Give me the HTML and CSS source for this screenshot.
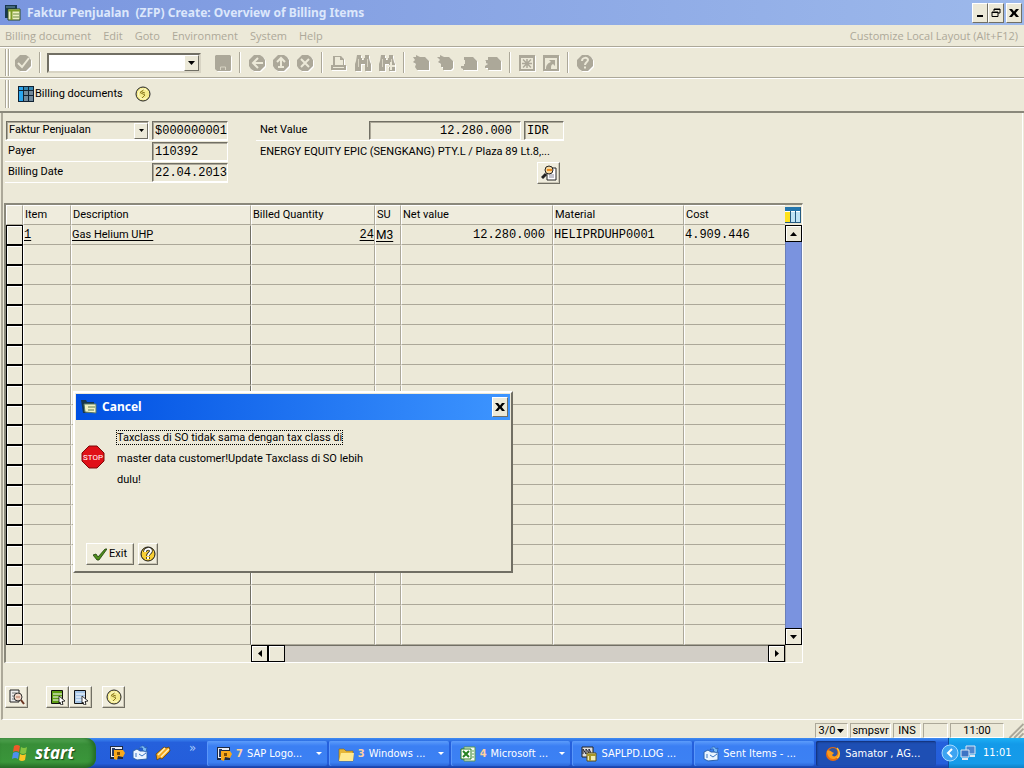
FILE: index.html
```html
<!DOCTYPE html>
<html lang="id">
<head>
<meta charset="utf-8">
<title>Faktur Penjualan (ZFP) Create: Overview of Billing Items</title>
<link rel="stylesheet" href="styles.css">
</head>
<body>
<svg class="defs" aria-hidden="true">
  <symbol id="close" viewBox="0 0 10 10"><path d="M0 1h3l2 2.500L7 1h3L6.700 5 10 9H7L5 6.500 3 9H0l3.300-4z" fill="#000"/></symbol>
  <symbol id="dot" viewBox="0 0 16 16"><path d="M5 0h6l3 2 2 3v6l-3 3-2 2H5l-3-2-2-3V5l3-3z"/></symbol>
  <symbol id="bino" viewBox="0 0 16 16"><path d="M2 0h4v3h1v2h2V3h1V0h4v3l1 4 1 2v7h-6V9H6v7H0V9l1-3z"/><path d="M3.500 4v8M12.500 4v8" stroke="#d8d4c3" fill="none"/></symbol>
  <symbol id="clock" viewBox="0 0 16 16"><circle cx="8" cy="8" r="7" fill="#f5ec8c" stroke="#222"/><path d="M12 4.500a5 5 0 1 0 0 7" fill="none" stroke="#fffbd0"/><path d="M8.500 4 5 6.500l5 2.500-3 3M7 6l3 1" fill="none" stroke="#8a7a20"/></symbol>
  <symbol id="win" viewBox="0 0 16 16"><path d="M0 0h12v13H0z" fill="#18384c"/><path d="M1 2h9" stroke="#6f95ad"/><path d="M3 4h12v11H3z" fill="#eef0c0" stroke="#2d4a20"/><path d="M3 5.500h12M6.500 5v10" stroke="#7d9c28" stroke-width="2"/><path d="M8 9h6M8 12h6" stroke="#6b8c40"/></symbol>
  <symbol id="sap" viewBox="0 0 16 16"><path d="M1 1h13v13H1z" fill="#1d2a45"/><path d="M2 2h11v2H5v8H2z" fill="#e9eef7"/><path d="M3 3h3v8H3z" fill="#263a66"/><path d="M5 5h9l2 3-2 4-5-1-1 4-3-1z" fill="#f8a91b"/><path d="M8 7h3v3H8z" fill="#7a4b05"/></symbol>
  <symbol id="mail" viewBox="0 0 16 16"><path d="M1 6 5 4l3 2h7v8L5 15 1 13z" fill="#eaf4ff" stroke="#2b62ac"/><path d="M7 4c2-4 5-4 6-1l2-1-1 5-4-2 1-1c-1-2-2-1-4 0z" fill="#79baf5" stroke="#1c4f9d" stroke-width=".6"/><path d="M4 8v4M7 9l3 2 4-3" stroke="#3b77c2" fill="none"/></symbol>
  <symbol id="list" viewBox="0 0 16 16"><path d="M1.500 1.500h11v13h-11z" stroke="#111"/><path d="M3 5h9M3 8h9M3 11h9" stroke="#fff"/><path d="m9 7 6 5-3 .5 1 3-2 .5-1-3-1 1z" fill="#fff" stroke="#111" stroke-width=".8"/></symbol>
</svg>

<header class="titlebar">
  <svg class="i16"><use href="#win"/></svg>
  <h1>Faktur Penjualan&nbsp; (ZFP) Create: Overview of Billing Items</h1>
  <div class="winbuttons">
    <button class="wb" aria-label="Minimize"><svg viewBox="0 0 10 10"><path d="M2 7h6v2H2z"/></svg></button>
    <button class="wb" aria-label="Restore"><svg viewBox="0 0 10 10"><path d="M3 3V1h6v4H7M3 1.500h6M1 4h6v4.500H1zM1 4.500h6" fill="none" stroke="#000"/></svg></button>
    <button class="wb wb-close" aria-label="Close"><svg><use href="#close"/></svg></button>
  </div>
</header>

<nav class="menubar">
  <button>Billing document</button><button>Edit</button><button>Goto</button><button>Environment</button><button>System</button><button>Help</button>
  <button class="menu-right">Customize Local Layout (Alt+F12)</button>
</nav>

<div class="toolbar">
  <span class="grip"></span>
  <button class="tb" aria-label="Enter" disabled><svg class="i16"><use href="#dot"/><path class="cut" d="m3 8 4 4 7-9"/></svg></button>
  <span class="sep"></span>
  <div class="command"><input aria-label="Command"><button aria-label="History"><svg class="arrow" viewBox="0 0 7 4"><path d="M0 0h7L3.500 4z"/></svg></button></div>
  <span class="space"></span>
  <button class="tb" aria-label="Save" disabled><svg class="i16"><path d="M1 0h14l1 1v14l-1 1H2l-2-2V1z"/><path d="M5.500 15v-3h5v3" stroke="#d8d4c3" fill="none"/></svg></button>
  <span class="sep"></span>
  <button class="tb" aria-label="Back" disabled><svg class="i16"><use href="#dot"/><path class="cut" d="M9 3 4 8l5 5M4 8h10"/></svg></button>
  <button class="tb" aria-label="Exit session" disabled><svg class="i16"><use href="#dot"/><path class="cut" d="m4 7 4-4 4 4M8 4v8M5 12h6"/></svg></button>
  <button class="tb" aria-label="Cancel" disabled><svg class="i16"><use href="#dot"/><path class="cut" d="m4 4 8 8m0-8-8 8"/></svg></button>
  <span class="sep"></span>
  <button class="tb" aria-label="Print" disabled><svg class="i16"><path d="M2 1h8l3 3v6h2v5H0v-5h2z"/><path d="M4 2h5v3h3v5H4zM2 12h11v1H2z" fill="#ece9d8"/></svg></button>
  <button class="tb" aria-label="Find" disabled><svg class="i16"><use href="#bino"/></svg></button>
  <button class="tb" aria-label="Find next" disabled><svg class="i16"><use href="#bino"/><path class="cut" d="M12 7v8M8 11h8"/></svg></button>
  <span class="sep"></span>
  <button class="tb" aria-label="First page" disabled><svg class="i16"><path d="M0 2h3V0l4 2h5l4 4v9H4l-2-3 1-3-3-2 2-2z"/></svg></button>
  <button class="tb" aria-label="Previous page" disabled><svg class="i16"><path d="M0 2h3V0l4 2h5l4 4v7l-2 2H6v-3H4V9L1 7l2-2z"/></svg></button>
  <button class="tb" aria-label="Next page" disabled><svg class="i16"><path d="M3 5V2h9l4 4v9H2v-1l-2-1v-2h3V9h1V5z"/></svg></button>
  <button class="tb" aria-label="Last page" disabled><svg class="i16"><path d="M3 2h9l4 4v9H3v-2H0v-2l3-2-2-1V6L0 5h3z"/></svg></button>
  <span class="sep"></span>
  <button class="tb" aria-label="New session" disabled><svg class="i16"><path d="M0 0h16v16H0z"/><path d="M2 3h12v11H2z" fill="#ece9d8"/><path d="M8 4v9M3 8.500h10M4 4.500l8 8M12 4.500l-8 8" stroke="#aca899" stroke-width="1.500"/></svg></button>
  <button class="tb" aria-label="Create shortcut" disabled><svg class="i16"><path d="M0 0h16v16H0z"/><path d="M2 3h12v11H2z" fill="#ece9d8"/><path d="M6 5h6v6l-2-2c-2 1-2 2-2 5H3c0-4 2-6 5-7z"/></svg></button>
  <span class="sep"></span>
  <button class="tb" aria-label="Help" disabled><svg class="i16"><use href="#dot"/><path class="cut" d="M5 6c0-4 6-4 6-1 0 2-3 2-3 5M8 11.500v2"/></svg></button>
</div>

<div class="toolbar appbar">
  <span class="grip"></span>
  <button class="app"><svg class="i16"><path d="M0 0h16v16H0z" fill="#123"/><path d="M1 1h4v3H1zM1 5h4v10H1z" fill="#2aa5ee"/><path d="M6 1h4v3H6zM11 1h4v3h-4z" fill="#3586b0"/><path d="M6 5h4v4H6zM11 5h4v4h-4zM6 10h4v5H6zM11 10h4v5h-4z" fill="#71899b"/></svg>Billing documents</button>
  <button class="app" aria-label="Conditions"><svg class="i16"><use href="#clock"/></svg></button>
</div>

<main>
  <div class="form">
    <div class="group">
      <div class="line">
        <div class="combo"><select aria-label="Billing type"><option>Faktur Penjualan</option></select><span class="drop"><svg class="arrow" viewBox="0 0 7 4"><path d="M0 0h7L3.500 4z"/></svg></span></div>
        <input class="field" aria-label="Document number" value="$000000001">
      </div>
      <div class="line"><label for="payer">Payer</label><input class="field" id="payer" value="110392"></div>
      <div class="line"><label for="date">Billing Date</label><input class="field" id="date" value="22.04.2013"></div>
    </div>
    <div class="group group-right">
      <div class="line"><label for="net">Net Value</label><input class="field net" id="net" value="12.280.000"><input class="field cur" aria-label="Currency" value="IDR"></div>
      <p>ENERGY EQUITY EPIC (SENGKANG) PTY.L / Plaza 89 Lt.8,...</p>
      <button class="raised detail" aria-label="Header details"><svg class="i16"><path d="M6 3h9v12H6z" fill="#fff" stroke="#222"/><path d="M8 10h5M8 12h5" stroke="#889"/><path d="M1 13l4-4" stroke="#222" stroke-width="3"/><circle cx="8" cy="5" r="4" fill="#f6d9a0" stroke="#222"/><path d="M6 4h5v2H6z" fill="#ef8d22"/></svg></button>
    </div>
  </div>

  <div class="grid">
    <table>
      <colgroup><col class="c-sel"><col class="c-item"><col class="c-desc"><col class="c-qty"><col class="c-su"><col class="c-net"><col class="c-mat"><col class="c-cost"></colgroup>
      <thead><tr><th></th><th>Item</th><th>Description</th><th>Billed Quantity</th><th>SU</th><th>Net value</th><th>Material</th><th>Cost</th></tr></thead>
      <tbody>
        <tr><td></td><td><a href="#" class="mono">1</a></td><td><a href="#">Gas Helium UHP</a></td><td class="num"><a href="#" class="mono">24</a></td><td><a href="#" class="su">M3</a></td><td class="num mono amount">12.280.000</td><td class="mono">HELIPRDUHP0001</td><td class="mono">4.909.446</td></tr>
        <tr><td></td><td></td><td></td><td></td><td></td><td></td><td></td><td></td></tr>
        <tr><td></td><td></td><td></td><td></td><td></td><td></td><td></td><td></td></tr>
        <tr><td></td><td></td><td></td><td></td><td></td><td></td><td></td><td></td></tr>
        <tr><td></td><td></td><td></td><td></td><td></td><td></td><td></td><td></td></tr>
        <tr><td></td><td></td><td></td><td></td><td></td><td></td><td></td><td></td></tr>
        <tr><td></td><td></td><td></td><td></td><td></td><td></td><td></td><td></td></tr>
        <tr><td></td><td></td><td></td><td></td><td></td><td></td><td></td><td></td></tr>
        <tr><td></td><td></td><td></td><td></td><td></td><td></td><td></td><td></td></tr>
        <tr><td></td><td></td><td></td><td></td><td></td><td></td><td></td><td></td></tr>
        <tr><td></td><td></td><td></td><td></td><td></td><td></td><td></td><td></td></tr>
        <tr><td></td><td></td><td></td><td></td><td></td><td></td><td></td><td></td></tr>
        <tr><td></td><td></td><td></td><td></td><td></td><td></td><td></td><td></td></tr>
        <tr><td></td><td></td><td></td><td></td><td></td><td></td><td></td><td></td></tr>
        <tr><td></td><td></td><td></td><td></td><td></td><td></td><td></td><td></td></tr>
        <tr><td></td><td></td><td></td><td></td><td></td><td></td><td></td><td></td></tr>
        <tr><td></td><td></td><td></td><td></td><td></td><td></td><td></td><td></td></tr>
        <tr><td></td><td></td><td></td><td></td><td></td><td></td><td></td><td></td></tr>
        <tr><td></td><td></td><td></td><td></td><td></td><td></td><td></td><td></td></tr>
        <tr><td></td><td></td><td></td><td></td><td></td><td></td><td></td><td></td></tr>
        <tr><td></td><td></td><td></td><td></td><td></td><td></td><td></td><td></td></tr>
      </tbody>
    </table>
    <div class="vscroll">
      <button class="config" aria-label="Table settings"><svg class="i16"><path d="M0 0h16v16H0z" fill="#fff"/><path d="M0 0h16v4H0z" fill="#2476ad"/><path d="M0 5h5v10H0z" fill="#ffe21c"/><path d="M6 5h4v10H6zM11 5h4v10h-4z" fill="#bfe3f5"/><path d="M5.500 4v12M10.500 4v12M15.500 0v16M0 15.500h16" stroke="#245a80"/></svg></button>
      <button class="sb" aria-label="Scroll up"><svg class="arrow" viewBox="0 0 7 4"><path d="M0 4h7L3.500 0z"/></svg></button>
      <span class="track"></span>
      <button class="sb" aria-label="Scroll down"><svg class="arrow" viewBox="0 0 7 4"><path d="M0 0h7L3.500 4z"/></svg></button>
    </div>
    <div class="hscroll">
      <span class="fixed"></span>
      <button class="sb" aria-label="Scroll left"><svg class="side" viewBox="0 0 4 7"><path d="M4 0v7L0 3.500z"/></svg></button>
      <button class="sb" aria-label="Scroll position"></button>
      <span class="track"></span>
      <button class="sb" aria-label="Scroll right"><svg class="side" viewBox="0 0 4 7"><path d="M0 0v7l4-3.500z"/></svg></button>
    </div>
    <span class="corner"></span>
  </div>

  <div class="actions">
    <button class="raised" aria-label="Item details"><svg class="i16"><path d="M1 1h9v12H1z" fill="#eee" stroke="#222"/><path d="M3 4h5M3 7h3M3 10h4" stroke="#777"/><circle cx="9" cy="8" r="4" fill="#f2d8c8" stroke="#333"/><path d="M7 8h4" stroke="#b87058"/><path d="m12 11 3 4" stroke="#6b3522" stroke-width="2"/></svg></button>
    <div class="pair">
      <button class="raised" aria-label="Select all"><svg class="i16" fill="#5d9c13"><use href="#list"/></svg></button>
      <button class="raised" aria-label="Deselect all"><svg class="i16" fill="#a4c4e4"><use href="#list"/></svg></button>
    </div>
    <button class="raised" aria-label="Item conditions"><svg class="i16"><use href="#clock"/></svg></button>
  </div>

  <section class="dialog" role="dialog" aria-label="Cancel">
    <header class="dialog-title">
      <svg class="i16" viewBox="0 0 16 16"><path d="M0 1h5l1 2h7v11H2z" fill="#16364f"/><path d="M3 5h12v9L4 13z" fill="#f1f2c4" stroke="#587a6a"/><path d="M7 8h7M7 11h6" stroke="#5d7b4b"/></svg>
      <h2>Cancel</h2>
      <button class="wb" aria-label="Close dialog"><svg><use href="#close"/></svg></button>
    </header>
    <div class="dialog-body">
      <svg class="stop" viewBox="0 0 24 24"><path d="M8 1h8l7 7v8l-7 7H8l-7-7V8z" fill="#e01018" stroke="#7d0808"/><text x="12" y="15" text-anchor="middle">STOP</text></svg>
      <div class="message"><p><span class="focus">Taxclass di SO tidak sama dengan tax class di</span></p><p>master data customer!Update Taxclass di SO lebih</p><p>dulu!</p></div>
    </div>
    <footer>
      <button class="raised exit"><svg viewBox="0 0 14 14"><path d="m0 8 3-1 2 3 7-8h2L6 13H4z" fill="#4f8f1a" stroke="#1d3d0b" stroke-width=".8"/></svg>Exit</button>
      <button class="raised help" aria-label="Help on message"><svg class="i16" viewBox="0 0 16 16"><circle cx="8" cy="8" r="7" fill="#f8cf35" stroke="#111"/><path d="M5 6c0-4 6-4 6-1 0 2-3 2-3 5M8 11v2" fill="none" stroke="#222" stroke-width="3.500"/><path d="M5 6c0-4 6-4 6-1 0 2-3 2-3 5M8 11v2" fill="none" stroke="#fff" stroke-width="2"/></svg></button>
    </footer>
  </section>
</main>

<div class="status">
  <span class="s-sys">3/0<svg class="arrow" viewBox="0 0 7 4"><path d="M0 0h7L3.500 4z"/></svg></span><span class="s-srv">smpsvr</span><span class="s-ins">INS</span><span class="s-empty"></span><span class="s-time">11:00</span>
  <svg class="sizer" viewBox="0 0 16 16"><path d="M1 16 16 1M6 16 16 6M11 16l5-5" stroke="#aaa79a" stroke-width="2"/></svg>
</div>

<footer class="taskbar">
  <button class="start"><svg viewBox="0 0 18 18"><path d="M3 2q3-2 6 0L8 8Q5 6 2 8z" fill="#ee5a29"/><path d="M10 3q3 2 6 0l-1 6q-3 2-6 0z" fill="#83c441"/><path d="M2 9q3-2 6 0l-1 6q-3-2-6 0z" fill="#4e8fee"/><path d="M9 10q3 2 6 0l-1 6q-3 2-6 0z" fill="#fbc525"/></svg>start</button>
  <div class="quick">
    <svg class="i16"><use href="#sap"/></svg><svg class="i16"><use href="#mail"/></svg>
    <svg class="i16"><path d="m1 9 8-7 2 1 3-1 1 4-8 8-2-1-3 2z" fill="#f4a81e" stroke="#5c3a05" stroke-width=".7"/><path d="m3 10 7-7M6 12l8-8" stroke="#fff2bd" stroke-width="1.500"/></svg>
    <span class="more">»</span>
  </div>
  <div class="tasks">
    <button><svg class="i16"><use href="#sap"/></svg><b>7</b><span>SAP Logo...</span><i></i></button>
    <button><svg class="i16"><path d="M1 3h5l2 2h7v10H1z" fill="#e6b637" stroke="#8a6610" stroke-width=".6"/><path d="M3 7h13l-1 8H1z" fill="#ffe98f"/></svg><b>3</b><span>Windows ...</span><i></i></button>
    <button><svg class="i16"><path d="M4 1h11v14H4z" fill="#f3faf0" stroke="#5a9a50"/><path d="M1 3h10v10H1z" fill="#fff" stroke="#2b7d22"/><path d="m3 5 6 6M9 5l-6 6" stroke="#258122" stroke-width="2"/><path d="M12 5h2M12 8h2M12 11h2" stroke="#5a9a50"/></svg><b>4</b><span>Microsoft ...</span><i></i></button>
    <button><svg class="i16"><path d="M1 1h11v10H1z" fill="#ddd" stroke="#222"/><path d="M2 8V3l3 5V3l3 4V3l2 4" fill="none" stroke="#223"/><path d="M6 7h9v8H6z" fill="#f1eeb5" stroke="#594b10"/><path d="M6 9h9M9 9v6" stroke="#a89728" stroke-width="2"/></svg><span>SAPLPD.LOG ...</span></button>
    <button><svg class="i16"><use href="#mail"/></svg><span>Sent Items - ...</span></button>
    <button class="active"><svg class="i16"><circle cx="8" cy="8" r="7" fill="#e66a10"/><circle cx="8" cy="6.500" r="4.500" fill="#3156a0"/><path d="M2 5c2-1 4 0 5 1l2 1-2 2c1 2 4 2 6-1 0 3-2 5-5 5S2 10 2 5z" fill="#f99b1c"/><path d="M12 2c3 3 3 8 0 10" fill="none" stroke="#ffc233" stroke-width="1.500"/></svg><span>Samator , AG...</span></button>
  </div>
  <div class="tray">
    <svg class="chev" viewBox="0 0 18 18"><circle cx="9" cy="9" r="8" fill="#3da4f2" stroke="#a5dbff"/><path d="M11 5 7 9l4 4" fill="none" stroke="#fff" stroke-width="2"/></svg>
    <svg class="i16"><path d="M6 1h9v8H6z" fill="#4d87d0" stroke="#dbe8f4"/><path d="M1 5h8v7H1z" fill="#3d74c4" stroke="#dbe8f4"/><path d="M2 14h6M10 11h5" stroke="#dbe8f4" stroke-width="2"/></svg>
    <span>11:01</span>
  </div>
</footer>
</body>
</html>
```
FILE: styles.css
```css
* { box-sizing: border-box; }
:root { --face: #ece9d8; --shade: #aca899; --dark: #716f64; }
body { margin: 0; min-height: 100vh; display: flex; flex-direction: column; background: var(--face); font: 11px/14px Roboto, "Liberation Sans", Arial, sans-serif; color: #000; }
button, input, select { font: inherit; color: inherit; margin: 0; padding: 0; border: 0; border-radius: 0; background: none; }
h1, h2, p { margin: 0; font-weight: normal; }
.defs { position: absolute; width: 0; height: 0; }
.i16 { width: 16px; height: 16px; flex: none; display: block; }
.arrow { width: 7px; height: 4px; flex: none; display: block; }
.side { width: 4px; height: 7px; display: block; }

.titlebar { display: flex; align-items: center; gap: 6px; height: 25px; padding: 0 2px 0 5px; background: linear-gradient(to right, #7a96df, #9db9eb); }
.titlebar h1 { flex: 1; font: bold 12px/16px "Noto Sans", "Open Sans", sans-serif; color: #dce7fb; }
.winbuttons { display: flex; }
.wb { display: flex; align-items: center; justify-content: center; width: 16px; height: 20px; background: var(--face); border: 1px solid; border-color: #fff var(--dark) var(--dark) #fff; }
.wb svg { width: 10px; height: 10px; }
.wb-close { margin-left: 2px; }

.menubar { display: flex; gap: 12px; align-items: center; height: 22px; padding: 0 6px 0 5px; border-bottom: 1px solid var(--shade); font: 11px/14px "Open Sans", "Noto Sans", sans-serif; color: var(--shade); }
.menu-right { margin-left: auto; }

.toolbar { display: flex; align-items: center; gap: 8px; height: 31px; padding-left: 5px; border-top: 1px solid #fff; border-bottom: 1px solid var(--shade); }
.grip { align-self: stretch; width: 4px; margin: 1px -2px 1px 0; border: solid; border-width: 0 1px; border-color: var(--shade); box-shadow: inset 1px 0 #fff, 1px 0 #fff; }
.sep { width: 2px; height: 21px; border-left: 1px solid var(--shade); border-right: 1px solid #fff; }
.space { width: 0; margin-left: -2px; }
.tb { fill: var(--shade); filter: drop-shadow(1px 1px 0 #fff); }
.cut { fill: none; stroke: var(--face); stroke-width: 2; }
.command { display: flex; width: 154px; height: 20px; margin-left: -2px; background: #fff; border: 2px solid; border-color: var(--dark) #d8d4c4 #d8d4c4 var(--dark); }
.command input { flex: 1; min-width: 0; outline: 0; }
.command button, .drop { display: flex; align-items: center; justify-content: center; width: 15px; background: var(--face); border: 1px solid; border-color: #fff var(--dark) var(--dark) #fff; }
.appbar { height: 35px; padding-bottom: 2px; border-bottom: 2px solid #8a887b; }
.app { display: flex; align-items: center; gap: 1px; margin-right: 4px; }
.appbar .grip { margin-right: 1px; }

main { position: relative; flex: 1; margin: 0 1px; padding: 7px 2px 0; border-left: 2px solid var(--shade); border-right: 1px solid #fff; border-bottom: 1px solid #fff; }
.form { display: flex; align-items: flex-start; gap: 28px; height: 83px; }
.group { width: 223px; }
.group-right { width: 308px; }
.line { display: flex; justify-content: space-between; align-items: center; gap: 3px; height: 21px; padding-left: 1px; border-bottom: 1px solid #fff; }
.line label { flex: 1; padding-left: 2px; }
.group-right .line label { padding-left: 3px; }
.group-right p { height: 21px; padding-left: 4px; line-height: 21px; white-space: nowrap; }
.field { width: 76px; height: 19px; padding: 1px 0 0 2px; font: 12px/16px "Liberation Mono", monospace; border: 1px solid; border-color: var(--dark) #fff #fff var(--dark); box-shadow: inset 1px 1px var(--shade); }
.net { width: 152px; padding-right: 8px; text-align: right; }
.cur { width: 40px; }
.combo { position: relative; flex: 1; height: 19px; border: 1px solid; border-color: var(--dark) #fff #fff var(--dark); box-shadow: inset 1px 1px var(--shade); }
.combo select { display: block; width: 100%; height: 17px; padding-left: 2px; appearance: none; }
.drop { position: absolute; top: 1px; right: 0; bottom: 0; width: 14px; pointer-events: none; }
.drop .arrow { width: 5px; height: 3px; }
.raised { display: flex; align-items: center; justify-content: center; width: 23px; height: 22px; background: #f0eddd; border: 1px solid; border-color: #fff var(--dark) var(--dark) #fff; box-shadow: inset -1px -1px #c9c5b4; }
.detail { margin: 0 4px 0 auto; }

.grid { display: grid; grid-template-columns: 779px 17px; width: max-content; margin-left: -1px; border: 1px solid var(--shade); border-top: 2px solid #8a887b; border-left: 2px solid #8a887b; border-right-color: #fff; border-bottom-color: #fff; }
table { table-layout: fixed; width: 779px; border-collapse: separate; border-spacing: 0; }
.c-sel { width: 17px; } .c-item { width: 48px; } .c-desc { width: 180px; } .c-qty { width: 124px; } .c-su { width: 26px; } .c-net { width: 152px; } .c-mat { width: 131px; } .c-cost { width: 101px; }
th { height: 20px; padding: 0 1px; text-align: left; font-weight: normal; background: #efecdd; border: 1px solid; border-color: #fff var(--shade) var(--shade) #fff; }
td { height: 20px; padding: 0; border: 1px solid; border-color: transparent var(--shade) var(--shade) #fff; line-height: 16px; white-space: nowrap; }
td:first-child { border: 1px solid #000; box-shadow: inset 1px 1px #fff; }
td:nth-child(3) { border-right-color: var(--dark); }
td:last-child, th:last-child { border-right: 0; }
td a { color: #000; text-underline-offset: 2px; }
.mono { font-family: "Liberation Mono", monospace; font-size: 12px; }
.num { text-align: right; }
td.amount { padding-right: 7px; }
.su { font-size: 12px; }
.vscroll { display: flex; flex-direction: column; }
.config { height: 20px; }
.sb { display: flex; align-items: center; justify-content: center; width: 17px; height: 17px; flex: none; background: var(--face); border: 1px solid #000; box-shadow: inset 1px 1px #fff; }
.vscroll .track { flex: 1; background: #7a93df; border: solid #6a7fb8; border-width: 0 1px; }
.hscroll { display: flex; height: 17px; }
.fixed { width: 245px; }
.hscroll .track { flex: 1; background: #d2cec6; border-top: 1px solid var(--dark); }
.corner { border-left: 1px solid var(--shade); }
.actions { display: flex; gap: 10px; margin-top: 23px; }
.pair { display: flex; margin-left: 8px; }

.dialog { position: absolute; left: 70px; top: 278px; width: 440px; height: 182px; display: flex; flex-direction: column; background: var(--face); border: 2px solid; border-color: #fff var(--dark) var(--dark) #fff; padding: 1px; }
.dialog-title { display: flex; align-items: center; gap: 5px; height: 26px; padding: 0 2px 0 5px; background: linear-gradient(to right, #0050e2, #3d95ff); }
.dialog-title h2 { flex: 1; font: bold 12px/16px "Noto Sans", "Open Sans", sans-serif; color: #fff; }
.dialog-body { flex: 1; display: flex; align-items: flex-start; gap: 12px; padding: 7px 5px; }
.stop { width: 24px; height: 24px; margin-top: 18px; }
.stop text { font: 8px Roboto, sans-serif; fill: #fff; }
.message p { height: 21px; line-height: 21px; }
.focus { display: inline-block; line-height: 13px; outline: 1px dotted #000; }
.dialog footer { display: flex; gap: 4px; padding: 0 10px 5px; }
.exit { width: 48px; gap: 2px; }
.exit svg { width: 14px; height: 14px; }
.help { width: 20px; }

.status { display: flex; gap: 2px; height: 18px; padding-top: 3px; }
.status span { display: flex; align-items: center; justify-content: center; height: 15px; border: 1px solid; border-color: var(--shade) #fff #fff var(--shade); }
.status .s-sys { margin-left: auto; width: 33px; gap: 2px; }
.s-srv { width: 41px; } .s-ins { width: 28px; } .s-empty { width: 25px; } .s-time { width: 54px; }
.sizer { width: 16px; height: 15px; margin-left: 2px; }

.taskbar { display: flex; height: 30px; background: linear-gradient(#3f8cf3, #2560dc 15%, #245edb 85%, #1941a5); font: 11px/14px "DejaVu Sans Condensed", "DejaVu Sans", sans-serif; color: #fff; }
.start { display: flex; align-items: center; gap: 6px; width: 96px; padding-left: 11px; border-radius: 0 10px 10px 0; background: linear-gradient(#5cae5c, #388e38 20%, #3a963a 80%, #2a6e2a); box-shadow: inset -3px 0 4px #236b23; font: italic bold 17px/20px "Open Sans", sans-serif; text-shadow: 1px 1px 1px #1b4a1b; }
.start svg { width: 18px; height: 18px; }
.quick { display: flex; align-items: center; gap: 7px; width: 111px; padding-left: 13px; }
.more { margin: 0 auto 10px; font-size: 13px; color: #a9cbfb; }
.tasks { flex: 1; display: flex; gap: 2px; padding: 3px 12px 2px 0; min-width: 0; }
.tasks button { flex: 1; min-width: 0; display: flex; align-items: center; gap: 4px; padding: 0 5px 0 9px; border-radius: 2px; background: linear-gradient(#5c9cfb, #3b7ff3 20%, #3c81f3 85%, #2b65d6); box-shadow: inset 1px 0 #5a97fa; white-space: nowrap; }
.tasks .active { background: #1e4fb4; box-shadow: inset 1px 1px 2px #122f72; }
.tasks b { font-weight: bold; color: #fcd0a0; }
.tasks i { margin-left: auto; border: 3px solid transparent; border-top-color: #fff; border-bottom: 0; }
.tray { display: flex; align-items: center; gap: 1px; width: 76px; background: linear-gradient(#1cb0f5, #139ae9 20%, #159be9 85%, #1080c4); border-left: 1px solid #0d4b9c; }
.chev { width: 18px; height: 18px; margin-left: -8px; }
.tray span { margin-left: 6px; }
```
